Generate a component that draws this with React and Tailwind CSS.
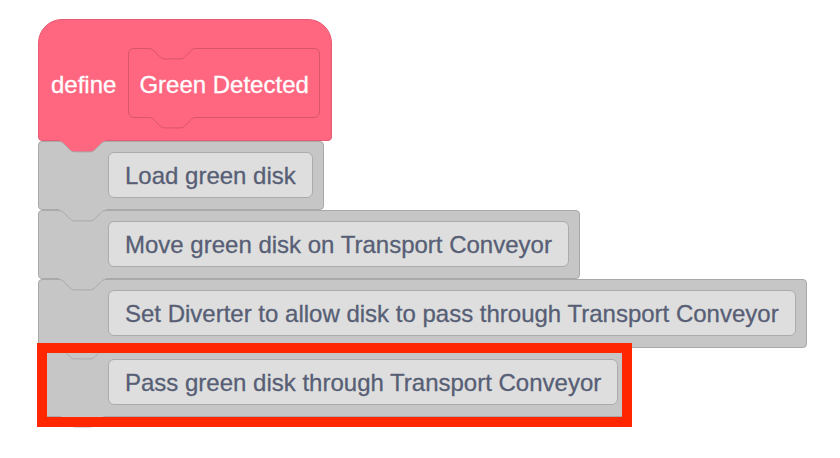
import React from 'react';

// Scratch-style notch, scaled 1.3x
const NOTCH =
  'c 2.6,0 3.9,1.3 5.2,2.6 l 5.2,5.2 c 1.3,1.3 2.6,2.6 5.2,2.6 h 15.6 c 2.6,0 3.9,-1.3 5.2,-2.6 l 5.2,-5.2 c 1.3,-1.3 2.6,-2.6 5.2,-2.6';

function Notch({ fill, stroke, y0 = 1.5, className = '' }) {
  return (
    <svg width="48" height="14" className={`absolute overflow-visible ${className}`}>
      <path d={`M0 0 V${y0} ${NOTCH} V0 Z`} fill={fill} />
      <path d={`M0 ${y0} ${NOTCH}`} fill="none" stroke={stroke} strokeWidth="1" />
    </svg>
  );
}

const blocks = [
  'Load green disk',
  'Move green disk on Transport Conveyor',
  'Set Diverter to allow disk to pass through Transport Conveyor',
  'Pass green disk through Transport Conveyor',
];

const zs = ['z-[4]', 'z-[3]', 'z-[2]', 'z-[1]'];

function CommandBlock({ label, z, last }) {
  return (
    <div
      className={`relative ${z} flex h-[69px] items-start rounded-[4px] border border-[#a9a9a9] bg-[#c6c6c6] pl-[69px] pr-[10px] pt-[10px]`}
    >
      <div className="flex h-[46px] items-center whitespace-nowrap rounded-[6px] border border-[#ababab] bg-[#dedede] px-[16px] pt-[1px] text-[24px] leading-none text-[#575e75] [-webkit-text-stroke:0.3px_#575e75]">
        {label}
      </div>
      <Notch
        fill="#c6c6c6"
        stroke="#a9a9a9"
        y0={last ? 0.5 : 1.5}
        className="left-[20px] top-full"
      />
    </div>
  );
}

export default function App() {
  return (
    <div
      className="relative h-[458px] w-[840px] overflow-hidden bg-white"
      style={{ fontFamily: '"Liberation Sans", Arial, sans-serif' }}
    >
      <div className="flex flex-col items-start pl-[38px] pt-[19px]">
        {/* define hat */}
        <div className="relative z-[5] flex h-[122px] items-start rounded-b-[4px] rounded-t-[24px] border border-[#e65a72] bg-[#ff6680] pl-[12px] pr-[11px] pt-[28px]">
          <div className="flex h-[70px] items-center pr-[12px] pt-[3px] text-[24px] leading-none text-white [-webkit-text-stroke:0.3px_white]">
            define
          </div>
          <div className="relative flex h-[70px] items-center whitespace-nowrap rounded-[6px] border border-[#d6566c] px-[10px] pt-[3px] text-[24px] leading-none text-white [-webkit-text-stroke:0.3px_white]">
            Green Detected
            <Notch fill="#ff6680" stroke="#d6566c" y0={0.5} className="left-[20px] top-[-1px]" />
            <Notch fill="#ff6680" stroke="#d6566c" y0={0.5} className="left-[20px] top-full" />
          </div>
          <Notch fill="#ff6680" stroke="#a9a9a9" className="left-[20px] top-full" />
        </div>

        {blocks.map((b, i) => (
          <CommandBlock key={b} label={b} z={zs[i]} last={i === blocks.length - 1} />
        ))}
      </div>

      {/* highlight box */}
      <div className="absolute left-[37px] top-[343px] z-[10] h-[84px] w-[595px] border-[10px] border-[#ff2600]" />
    </div>
  );
}
